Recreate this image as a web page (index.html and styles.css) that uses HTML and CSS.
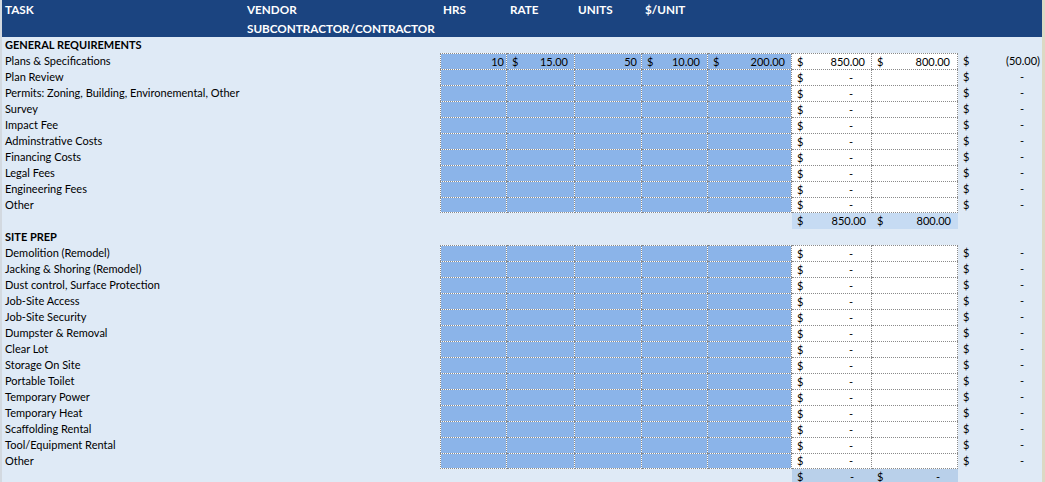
FILE: index.html
```html
<!DOCTYPE html>
<html>
<head>
<meta charset="utf-8">
<link rel="stylesheet" href="styles.css">
</head>
<body>
<div class="sheet">
  <div class="edge-l"></div>
  <div class="main">
    <div class="head">
      <span>TASK</span><span>VENDOR</span><span>HRS</span><span>RATE</span><span>UNITS</span><span>$/UNIT</span><span></span><span></span><span></span><span></span>
      <span class="l2"></span><span class="l2">SUBCONTRACTOR/CONTRACTOR</span><span class="l2"></span><span class="l2"></span><span class="l2"></span><span class="l2"></span><span class="l2"></span><span class="l2"></span><span class="l2"></span><span class="l2"></span>
    </div>

    <div class="row"><div class="c t sec">GENERAL REQUIREMENTS</div></div>

    <div class="row">
      <div class="c t">Plans &amp; Specifications</div><div class="c"></div>
      <div class="c b bl r p2">10</div>
      <div class="c b acc p6"><span>$</span><span>15.00</span></div>
      <div class="c b r p4">50</div>
      <div class="c b acc p7"><span>$</span><span>10.00</span></div>
      <div class="c b acc p6"><span>$</span><span>200.00</span></div>
      <div class="c w acc p6"><span>$</span><span>850.00</span></div>
      <div class="c w acc p7"><span>$</span><span>800.00</span></div>
      <div class="c v acc p2"><span>$</span><span>(50.00)</span></div>
    </div>
    <div class="row">
      <div class="c t">Plan Review</div><div class="c"></div>
      <div class="c b bl"></div><div class="c b"></div><div class="c b"></div><div class="c b"></div><div class="c b"></div>
      <div class="c w acc pd"><span>$</span><span>-</span></div><div class="c w"></div>
      <div class="c v acc pd"><span>$</span><span>-</span></div>
    </div>
    <div class="row">
      <div class="c t">Permits: Zoning, Building, Environemental, Other</div><div class="c"></div>
      <div class="c b bl"></div><div class="c b"></div><div class="c b"></div><div class="c b"></div><div class="c b"></div>
      <div class="c w acc pd"><span>$</span><span>-</span></div><div class="c w"></div>
      <div class="c v acc pd"><span>$</span><span>-</span></div>
    </div>
    <div class="row">
      <div class="c t">Survey</div><div class="c"></div>
      <div class="c b bl"></div><div class="c b"></div><div class="c b"></div><div class="c b"></div><div class="c b"></div>
      <div class="c w acc pd"><span>$</span><span>-</span></div><div class="c w"></div>
      <div class="c v acc pd"><span>$</span><span>-</span></div>
    </div>
    <div class="row">
      <div class="c t">Impact Fee</div><div class="c"></div>
      <div class="c b bl"></div><div class="c b"></div><div class="c b"></div><div class="c b"></div><div class="c b"></div>
      <div class="c w acc pd"><span>$</span><span>-</span></div><div class="c w"></div>
      <div class="c v acc pd"><span>$</span><span>-</span></div>
    </div>
    <div class="row">
      <div class="c t">Adminstrative Costs</div><div class="c"></div>
      <div class="c b bl"></div><div class="c b"></div><div class="c b"></div><div class="c b"></div><div class="c b"></div>
      <div class="c w acc pd"><span>$</span><span>-</span></div><div class="c w"></div>
      <div class="c v acc pd"><span>$</span><span>-</span></div>
    </div>
    <div class="row">
      <div class="c t">Financing Costs</div><div class="c"></div>
      <div class="c b bl"></div><div class="c b"></div><div class="c b"></div><div class="c b"></div><div class="c b"></div>
      <div class="c w acc pd"><span>$</span><span>-</span></div><div class="c w"></div>
      <div class="c v acc pd"><span>$</span><span>-</span></div>
    </div>
    <div class="row">
      <div class="c t">Legal Fees</div><div class="c"></div>
      <div class="c b bl"></div><div class="c b"></div><div class="c b"></div><div class="c b"></div><div class="c b"></div>
      <div class="c w acc pd"><span>$</span><span>-</span></div><div class="c w"></div>
      <div class="c v acc pd"><span>$</span><span>-</span></div>
    </div>
    <div class="row">
      <div class="c t">Engineering Fees</div><div class="c"></div>
      <div class="c b bl"></div><div class="c b"></div><div class="c b"></div><div class="c b"></div><div class="c b"></div>
      <div class="c w acc pd"><span>$</span><span>-</span></div><div class="c w"></div>
      <div class="c v acc pd"><span>$</span><span>-</span></div>
    </div>
    <div class="row last">
      <div class="c t">Other</div><div class="c"></div>
      <div class="c b bl"></div><div class="c b"></div><div class="c b"></div><div class="c b"></div><div class="c b"></div>
      <div class="c w acc pd"><span>$</span><span>-</span></div><div class="c w"></div>
      <div class="c v acc pd"><span>$</span><span>-</span></div>
    </div>
    <div class="row">
      <div class="c t"></div><div class="c"></div>
      <div class="c"></div><div class="c"></div><div class="c"></div><div class="c"></div><div class="c"></div>
      <div class="c tot acc p6"><span>$</span><span>850.00</span></div>
      <div class="c tot acc p7"><span>$</span><span>800.00</span></div>
      <div class="c"></div>
    </div>

    <div class="row"><div class="c t sec">SITE PREP</div></div>

    <div class="row">
      <div class="c t">Demolition (Remodel)</div><div class="c"></div>
      <div class="c b bl"></div><div class="c b"></div><div class="c b"></div><div class="c b"></div><div class="c b"></div>
      <div class="c w acc pd"><span>$</span><span>-</span></div><div class="c w"></div>
      <div class="c v acc pd"><span>$</span><span>-</span></div>
    </div>
    <div class="row">
      <div class="c t">Jacking &amp; Shoring (Remodel)</div><div class="c"></div>
      <div class="c b bl"></div><div class="c b"></div><div class="c b"></div><div class="c b"></div><div class="c b"></div>
      <div class="c w acc pd"><span>$</span><span>-</span></div><div class="c w"></div>
      <div class="c v acc pd"><span>$</span><span>-</span></div>
    </div>
    <div class="row">
      <div class="c t">Dust control, Surface Protection</div><div class="c"></div>
      <div class="c b bl"></div><div class="c b"></div><div class="c b"></div><div class="c b"></div><div class="c b"></div>
      <div class="c w acc pd"><span>$</span><span>-</span></div><div class="c w"></div>
      <div class="c v acc pd"><span>$</span><span>-</span></div>
    </div>
    <div class="row">
      <div class="c t">Job-Site Access</div><div class="c"></div>
      <div class="c b bl"></div><div class="c b"></div><div class="c b"></div><div class="c b"></div><div class="c b"></div>
      <div class="c w acc pd"><span>$</span><span>-</span></div><div class="c w"></div>
      <div class="c v acc pd"><span>$</span><span>-</span></div>
    </div>
    <div class="row">
      <div class="c t">Job-Site Security</div><div class="c"></div>
      <div class="c b bl"></div><div class="c b"></div><div class="c b"></div><div class="c b"></div><div class="c b"></div>
      <div class="c w acc pd"><span>$</span><span>-</span></div><div class="c w"></div>
      <div class="c v acc pd"><span>$</span><span>-</span></div>
    </div>
    <div class="row">
      <div class="c t">Dumpster &amp; Removal</div><div class="c"></div>
      <div class="c b bl"></div><div class="c b"></div><div class="c b"></div><div class="c b"></div><div class="c b"></div>
      <div class="c w acc pd"><span>$</span><span>-</span></div><div class="c w"></div>
      <div class="c v acc pd"><span>$</span><span>-</span></div>
    </div>
    <div class="row">
      <div class="c t">Clear Lot</div><div class="c"></div>
      <div class="c b bl"></div><div class="c b"></div><div class="c b"></div><div class="c b"></div><div class="c b"></div>
      <div class="c w acc pd"><span>$</span><span>-</span></div><div class="c w"></div>
      <div class="c v acc pd"><span>$</span><span>-</span></div>
    </div>
    <div class="row">
      <div class="c t">Storage On Site</div><div class="c"></div>
      <div class="c b bl"></div><div class="c b"></div><div class="c b"></div><div class="c b"></div><div class="c b"></div>
      <div class="c w acc pd"><span>$</span><span>-</span></div><div class="c w"></div>
      <div class="c v acc pd"><span>$</span><span>-</span></div>
    </div>
    <div class="row">
      <div class="c t">Portable Toilet</div><div class="c"></div>
      <div class="c b bl"></div><div class="c b"></div><div class="c b"></div><div class="c b"></div><div class="c b"></div>
      <div class="c w acc pd"><span>$</span><span>-</span></div><div class="c w"></div>
      <div class="c v acc pd"><span>$</span><span>-</span></div>
    </div>
    <div class="row">
      <div class="c t">Temporary Power</div><div class="c"></div>
      <div class="c b bl"></div><div class="c b"></div><div class="c b"></div><div class="c b"></div><div class="c b"></div>
      <div class="c w acc pd"><span>$</span><span>-</span></div><div class="c w"></div>
      <div class="c v acc pd"><span>$</span><span>-</span></div>
    </div>
    <div class="row">
      <div class="c t">Temporary Heat</div><div class="c"></div>
      <div class="c b bl"></div><div class="c b"></div><div class="c b"></div><div class="c b"></div><div class="c b"></div>
      <div class="c w acc pd"><span>$</span><span>-</span></div><div class="c w"></div>
      <div class="c v acc pd"><span>$</span><span>-</span></div>
    </div>
    <div class="row">
      <div class="c t">Scaffolding Rental</div><div class="c"></div>
      <div class="c b bl"></div><div class="c b"></div><div class="c b"></div><div class="c b"></div><div class="c b"></div>
      <div class="c w acc pd"><span>$</span><span>-</span></div><div class="c w"></div>
      <div class="c v acc pd"><span>$</span><span>-</span></div>
    </div>
    <div class="row">
      <div class="c t">Tool/Equipment Rental</div><div class="c"></div>
      <div class="c b bl"></div><div class="c b"></div><div class="c b"></div><div class="c b"></div><div class="c b"></div>
      <div class="c w acc pd"><span>$</span><span>-</span></div><div class="c w"></div>
      <div class="c v acc pd"><span>$</span><span>-</span></div>
    </div>
    <div class="row last">
      <div class="c t">Other</div><div class="c"></div>
      <div class="c b bl"></div><div class="c b"></div><div class="c b"></div><div class="c b"></div><div class="c b"></div>
      <div class="c w acc pd"><span>$</span><span>-</span></div><div class="c w"></div>
      <div class="c v acc pd"><span>$</span><span>-</span></div>
    </div>
    <div class="row">
      <div class="c t"></div><div class="c"></div>
      <div class="c"></div><div class="c"></div><div class="c"></div><div class="c"></div><div class="c"></div>
      <div class="c tot2 acc pd"><span>$</span><span>-</span></div>
      <div class="c tot2 acc pd"><span>$</span><span>-</span></div>
      <div class="c"></div>
    </div>
  </div>
  <div class="edge-r"></div>
</div>
</body>
</html>
```

FILE: styles.css
```css
:root {
  --cols: 242px 196px 67px 68px 67px 66px 84px 80px 86px 84px;
  --blue: #8bb4e9;
  --dot: #8a8a8a;
}
* { box-sizing: border-box; margin: 0; padding: 0; }
html, body { width: 1045px; height: 482px; overflow: hidden; }
body {
  background: #dfeaf6;
  font-family: Lato, "Liberation Sans", sans-serif;
  font-size: 11px;
  color: #000;
}
.sheet { display: flex; height: 482px; }
.edge-l { width: 2px; flex: none; background: #d3d9e0; }
.edge-r { width: 3px; flex: none; background: #dcd9c4; }
.main { width: 1040px; flex: none; }

.head {
  display: grid;
  grid-template-columns: var(--cols);
  grid-template-rows: 18px 19px;
  background: #1b4480;
  color: #fff;
  font-weight: bold;
  font-size: 11.7px;
}
.head span { padding-left: 3px; line-height: 18px; white-space: nowrap; }
.head .l2 { line-height: 20px; }

.row {
  display: grid;
  grid-template-columns: var(--cols);
  height: 16px;
}
.c {
  display: flex;
  align-items: center;
  height: 16px;
  white-space: nowrap;
  line-height: 14px;
}
.t { padding-left: 3px; }
.sec { font-weight: bold; }

.b, .w {
  border-top: 1px dotted var(--dot);
  border-right: 1px dotted var(--dot);
}
.b { background: linear-gradient(var(--blue), var(--blue)) padding-box, linear-gradient(#fff, #fff) border-box; }
.w { background: #fff; }
.bl { border-left: 1px dotted var(--dot); }
.last .b, .last .w { border-bottom: 1px dotted var(--dot); }

.r { justify-content: flex-end; }
.acc { justify-content: space-between; padding-left: 5px; }
.p2 { padding-right: 2px; }
.p4 { padding-right: 4px; }
.p6 { padding-right: 6px; }
.p7 { padding-right: 7px; }
.pd { padding-right: 18px; }
.tot { background: #c6dbf3; }
.tot2 { background: #b9d0ea; }
```
